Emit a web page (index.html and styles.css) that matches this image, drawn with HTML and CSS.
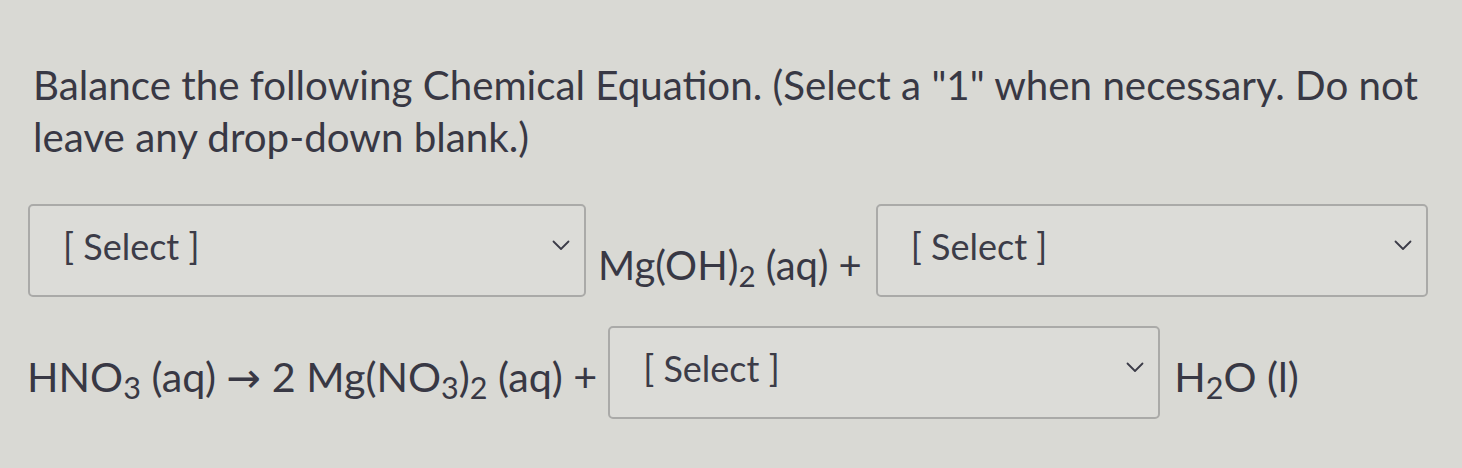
FILE: index.html
```html
<!DOCTYPE html>
<html lang="en">
<head>
<meta charset="utf-8">
<title>Balance the Chemical Equation</title>
<link rel="stylesheet" href="styles.css">
</head>
<body>
<main class="question">
  <p class="prompt">Balance the following Chemical Equation. (Select a "1" when necessary. Do not leave any drop-down blank.)</p>
  <div class="equation">
    <div class="eq-row row-one">
      <div class="select select-a"><span class="select-label">[ Select ]</span><svg class="chev" viewBox="0 0 18 11" width="18" height="11"><path d="M1.5 1.5 L9 9 L16.5 1.5" fill="none" stroke="currentColor" stroke-width="1.8" stroke-linecap="round" stroke-linejoin="round"/></svg></div>
      <span class="chem chem-low">Mg(OH)<sub>2</sub> (aq) +</span>
      <div class="select select-b"><span class="select-label">[ Select ]</span><svg class="chev" viewBox="0 0 18 11" width="18" height="11"><path d="M1.5 1.5 L9 9 L16.5 1.5" fill="none" stroke="currentColor" stroke-width="1.8" stroke-linecap="round" stroke-linejoin="round"/></svg></div>
    </div>
    <div class="eq-row row-two">
      <span class="chem">HNO<sub>3</sub> (aq) <span class="arrow">→</span> 2 Mg(NO<sub>3</sub>)<sub>2</sub> (aq) +</span>
      <div class="select select-c"><span class="select-label">[ Select ]</span><svg class="chev" viewBox="0 0 18 11" width="18" height="11"><path d="M1.5 1.5 L9 9 L16.5 1.5" fill="none" stroke="currentColor" stroke-width="1.8" stroke-linecap="round" stroke-linejoin="round"/></svg></div>
      <span class="chem">H<sub>2</sub>O (l)</span>
    </div>
  </div>
</main>
</body>
</html>
```
FILE: styles.css
```css
html, body {
  margin: 0;
  padding: 0;
}
body {
  background: #d9d9d4;
  color: #383844;
  font-family: Lato, "Open Sans", "Liberation Sans", sans-serif;
  width: 1462px;
  height: 468px;
  overflow: hidden;
}
.question {
  padding: 59px 0 0 33px;
}
.prompt {
  margin: 0;
  font-size: 40.3px;
  line-height: 52px;
  width: 1420px;
}
.equation {
  margin-top: 41px;
  margin-left: -5px;
  display: flex;
  flex-direction: column;
  gap: 29px;
}
.eq-row {
  display: flex;
  align-items: center;
}
.row-two { margin-left: -1px; }
.row-one .chem { margin: 0 14px 0 12px; }
.row-two .chem { font-size: 41.3px; padding-top: 8px; }
.row-two .chem:first-child { margin-right: 11px; }
.row-two .chem:last-child { margin-left: 14px; }
.chem {
  font-size: 40px;
  line-height: 1;
  white-space: nowrap;
}
.chem-low {
  padding-top: 28px;
}
.chem sub {
  font-size: 0.74em;
  vertical-align: -0.22em;
  line-height: 0;
}
.arrow {
  font-family: "DejaVu Sans", sans-serif;
  font-size: 1em;
  line-height: 0;
}
.select {
  box-sizing: border-box;
  height: 93px;
  border: 2px solid #aaaaa8;
  border-radius: 5px;
  background: #dcdcd8;
  display: flex;
  align-items: center;
  justify-content: space-between;
  padding: 0 14px 10px 33px;
  color: #3c3c48;
}
.select-a { width: 558px; }
.select-b { width: 552px; }
.select-c { width: 552px; }
.select-label {
  font-size: 36px;
  line-height: 1;
}
.chev {
  color: #3c3c48;
}
```
